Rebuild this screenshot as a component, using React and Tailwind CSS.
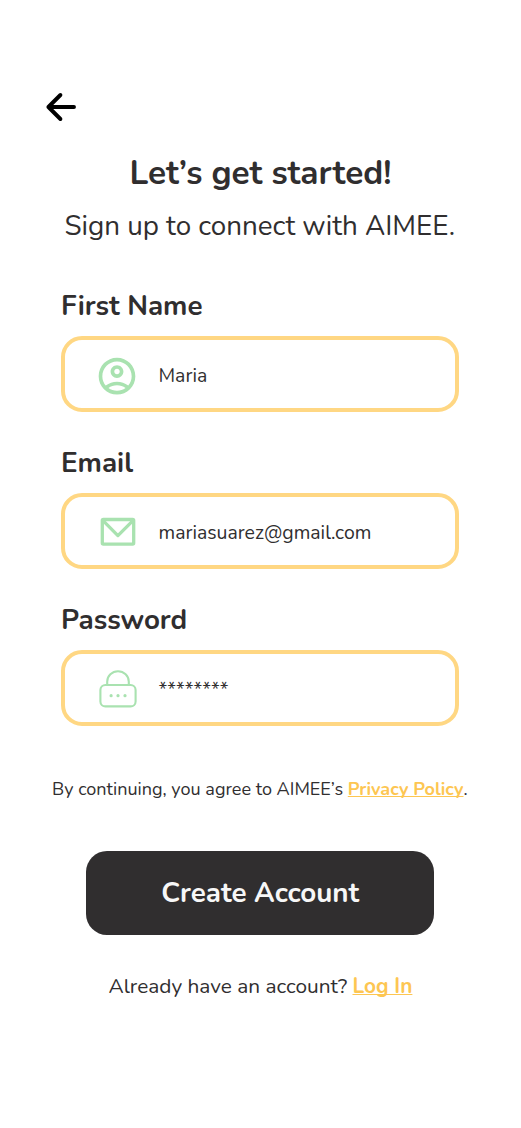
import React from "react";
import { MdOutlineAccountCircle } from "react-icons/md";

function MailIcon() {
  return (
    <svg className="h-[38px] w-[38px]" viewBox="0 0 38 38" fill="none" stroke="#a9e2b0" strokeWidth="3.3" strokeLinejoin="round">
      <rect x="4.3" y="6.5" width="31.4" height="24.6" rx="1" />
      <path d="M4.8 7.3L19.9 22.6L35.2 7.3" />
    </svg>
  );
}

function LockIcon() {
  return (
    <svg className="h-[40px] w-[40px]" viewBox="0 0 40 40" fill="none" stroke="#a9e2b0" strokeWidth="2.1">
      <rect x="3.4" y="16" width="35.2" height="21.4" rx="5" />
      <path d="M10.2 16V12.7a10.8 10.4 0 0 1 21.6 0V16" />
      <g fill="#a9e2b0" stroke="none">
        <circle cx="14.1" cy="26.7" r="1.6" />
        <circle cx="21" cy="26.7" r="1.6" />
        <circle cx="28" cy="26.7" r="1.6" />
      </g>
    </svg>
  );
}

function Field({ label, icon, children }) {
  return (
    <div className="mb-[37px] h-[120px] last:mb-0">
      <div className="h-[44px] text-[27.78px] leading-[29px] font-bold">{label}</div>
      <div className="flex h-[76px] w-[397.5px] items-center rounded-[21px] border-4 border-[#ffd783]">
        <div className="ml-[30px] flex w-[44px] justify-center pt-[1px]">{icon}</div>
        <div className="ml-[19.5px] pt-[3px] text-[19.45px]">{children}</div>
      </div>
    </div>
  );
}

export default function App() {
  return (
    <main className="flex h-[1128px] w-[521px] flex-col bg-white font-['Nunito','Lato',sans-serif] whitespace-nowrap text-[#302e2f]">
      <button className="mt-[91px] ml-[45px] h-[32px] w-[32px]" aria-label="Back">
        <svg className="h-8 w-8" viewBox="0 0 32 32" fill="none" stroke="#000" strokeWidth="3.9" strokeLinecap="round" strokeLinejoin="round">
          <path d="M29 16H3.4M15.4 4L3.4 16L15.4 28" />
        </svg>
      </button>
      <h1 className="mt-[30px] text-center text-[33.33px] leading-[40px] font-bold">Let’s get started!</h1>
      <p className="mt-[15px] pr-[1.5px] text-center text-[27.78px] leading-[36px]">Sign up to connect with AIMEE.</p>
      <form className="mt-[48px] ml-[61px] w-[398px]">
        <Field label="First Name" icon={<MdOutlineAccountCircle className="mt-[3px]" size={44.4} color="#a9e2b0" />}>
          <span>Maria</span>
        </Field>
        <Field label="Email" icon={<MailIcon />}>
          <span>mariasuarez@gmail.com</span>
        </Field>
        <Field label="Password" icon={<LockIcon />}>
          <span>********</span>
        </Field>
      </form>
      <p className="mt-[51px] ml-[52px] text-[18.06px] leading-[24px]">
        By continuing, you agree to AIMEE’s{" "}
        <a className="font-bold text-[#fdc652] underline decoration-1 underline-offset-1 [text-decoration-skip-ink:none]">Privacy Policy</a>.
      </p>
      <button className="mt-[50px] ml-[86px] flex h-[84px] w-[347.5px] items-center justify-center rounded-[21px] bg-[#302e2f] text-[27.78px] font-bold text-[#f7f7f7]">
        <span className="pt-[1px] pl-[1px]">Create Account</span>
      </button>
      <p className="mt-[37px] ml-[108.5px] text-[20.83px] leading-[28px]">
        Already have an account?{" "}
        <a className="font-bold text-[#fdc652] underline decoration-1 underline-offset-1 [text-decoration-skip-ink:none]">Log In</a>
      </p>
    </main>
  );
}
